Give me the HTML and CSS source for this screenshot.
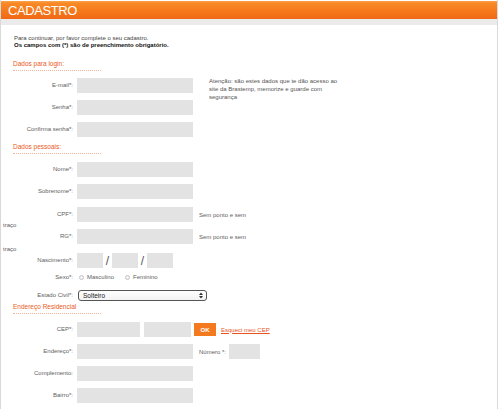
FILE: index.html
```html
<!DOCTYPE html>
<html lang="pt-BR">
<head>
<meta charset="utf-8">
<title>Cadastro</title>
<link rel="stylesheet" href="styles.css">
</head>
<body>
<div class="page">
  <div class="header"><h1 class="title">CADASTRO</h1></div>
  <div class="strip"></div>
  <div class="content">
    <div class="intro">
      <p>Para continuar, por favor complete o seu cadastro.</p>
      <p class="strong">Os campos com (*) são de preenchimento obrigatório.</p>
    </div>

    <h2 class="section-title s-login">Dados para login:</h2>
    <div class="login">
      <div class="rows">
        <div class="row"><span class="label">E-mail*:</span><span class="input w-full"></span></div>
        <div class="row"><span class="label">Senha*:</span><span class="input w-full"></span></div>
        <div class="row"><span class="label">Confirma senha*:</span><span class="input w-full"></span></div>
      </div>
      <p class="attention">Atenção: são estes dados que te dão acesso ao site da Brastemp, memorize e guarde com segurança</p>
    </div>

    <h2 class="section-title s-pessoais">Dados pessoais:</h2>
    <div class="rows">
      <div class="row"><span class="label">Nome*:</span><span class="input w-full"></span></div>
      <div class="row"><span class="label">Sobrenome*:</span><span class="input w-full"></span></div>
      <div class="row r-cpf"><span class="label">CPF*:</span><span class="input w-full"></span><span class="note">Sem ponto e sem</span></div>
      <div class="row"><span class="label"><span class="wrap">traço</span>RG*:</span><span class="input w-full"></span><span class="note">Sem ponto e sem</span></div>
      <div class="row r-nasc"><span class="label"><span class="wrap">traço</span>Nascimento*:</span>
        <span class="input w-date"></span><span class="slash">/</span><span class="input w-date"></span><span class="slash">/</span><span class="input w-date"></span>
      </div>
      <div class="row r-sexo"><span class="label">Sexo*:</span>
        <span class="radio"></span><span class="opt">Masculino</span>
        <span class="radio r2"></span><span class="opt">Feminino</span>
      </div>
      <div class="row r-civil"><span class="label">Estado Civil*:</span>
        <span class="select"><span class="sel-text">Solteiro</span>
          <svg class="sel-arrows" width="4" height="7" viewBox="0 0 4 7"><path d="M0 3 L2 0.5 L4 3 Z M0 4 L2 6.5 L4 4 Z" fill="#333"/></svg>
        </span>
      </div>
    </div>

    <h2 class="section-title s-end">Endereço Residencial</h2>
    <div class="rows">
      <div class="row"><span class="label">CEP*:</span><span class="input w-cep1"></span><span class="input w-cep2"></span><span class="btn-ok">OK</span><a class="link" href="#">Esqueci meu CEP</a></div>
      <div class="row"><span class="label">Endereço*:</span><span class="input w-full"></span><span class="note">Número *:</span><span class="input w-num"></span></div>
      <div class="row"><span class="label">Complemento:</span><span class="input w-full"></span></div>
      <div class="row"><span class="label">Bairro*:</span><span class="input w-full"></span></div>
    </div>
  </div>
</div>
</body>
</html>
```

FILE: styles.css
```css
html, body {
  margin: 0;
  padding: 0;
  background: #ffffff;
}
body {
  font-family: "Liberation Sans", Arial, sans-serif;
  color: #555555;
}
.page {
  width: 498px;
  height: 409px;
  box-sizing: border-box;
  border-left: 1px solid #d9d9d9;
  border-right: 1px solid #d9d9d9;
  overflow: hidden;
}
.header {
  margin-top: 1px;
  height: 18px;
  background: linear-gradient(#fba24c 0, #f88a26 12%, #f67b1c 50%, #f06816 100%);
  padding-left: 7px;
}
.title {
  margin: 0;
  font-size: 13px;
  font-weight: normal;
  letter-spacing: -0.4px;
  line-height: 19px;
  color: #ffffff;
}
.strip {
  height: 6px;
  background: #ebebeb;
}
.content {
  padding: 10px 0 0 1px;
}
.intro {
  margin-left: 12px;
  font-size: 6px;
  line-height: 7px;
  color: #444444;
}
.intro p {
  margin: 0;
}
.intro .strong {
  font-weight: bold;
  color: #111111;
}
.section-title {
  margin: 0 0 0 11px;
  width: 88px;
  font-size: 6.5px;
  font-weight: normal;
  line-height: 8px;
  color: #ea5a24;
  padding-bottom: 2px;
  border-bottom: 1px dotted #f4b59c;
}
.s-login { margin-top: 11px; }
.s-pessoais { margin-top: 6px; }
.s-end { margin-top: 2px; }
.login {
  display: flex;
  align-items: flex-start;
}
.rows {
  display: flex;
  flex-direction: column;
  gap: 7px;
  margin-top: 7px;
}
.s-pessoais + .rows,
.s-end + .rows {
  margin-top: 8px;
}
.row {
  display: flex;
  align-items: center;
  height: 15px;
}
.label {
  width: 71px;
  margin-right: 4px;
  flex: none;
  display: flex;
  justify-content: flex-end;
  align-items: center;
  font-size: 6px;
  line-height: 7px;
  color: #5e5e5e;
  align-self: stretch;
}
.wrap {
  margin-right: auto;
  margin-left: 1px;
  align-self: flex-start;
  margin-top: -7px;
}
.input {
  display: block;
  height: 15px;
  background: #e3e3e3;
  flex: none;
}
.w-full { width: 116px; }
.w-date { width: 26px; }
.w-cep1 { width: 63px; }
.w-cep2 { width: 47px; margin-left: 4px; }
.w-num { width: 31px; margin-left: 3px; }
.slash {
  width: 9px;
  text-align: center;
  font-size: 12px;
  color: #555555;
}
.note {
  margin-left: 6px;
  font-size: 6px;
  color: #5e5e5e;
}
.attention {
  margin: 6px 0 0 16px;
  width: 138px;
  font-size: 6px;
  line-height: 8px;
  color: #555555;
}
.r-cpf { margin-top: 1px; }
.r-nasc { margin-top: 2px; }
.r-sexo {
  height: 10px;
  margin-top: -3px;
}
.r-sexo .label { align-self: center; }
.radio {
  width: 5px;
  height: 5px;
  box-sizing: border-box;
  border: 1px solid #c4c4c4;
  border-radius: 50%;
  background: #f4f4f4;
  margin-left: 2px;
  flex: none;
}
.radio.r2 { margin-left: 11px; }
.opt {
  margin-left: 3px;
  font-size: 6px;
  color: #5e5e5e;
}
.r-civil {
  height: 11px;
  margin-top: 1px;
}
.select {
  margin-left: 1px;
  width: 129px;
  height: 11px;
  box-sizing: border-box;
  border: 1px solid #555555;
  border-radius: 3px;
  background: linear-gradient(#ffffff, #f2f2f2);
  display: flex;
  align-items: center;
  justify-content: space-between;
  padding: 0 3px 0 4px;
}
.sel-text {
  font-size: 6.5px;
  color: #222222;
}
.btn-ok {
  margin-left: 3px;
  width: 22px;
  height: 13px;
  background: #f47a20;
  color: #ffffff;
  font-size: 6px;
  font-weight: bold;
  display: flex;
  align-items: center;
  justify-content: center;
}
.link {
  margin-left: 5px;
  font-size: 6px;
  color: #e8541c;
  text-decoration: underline;
}
```
